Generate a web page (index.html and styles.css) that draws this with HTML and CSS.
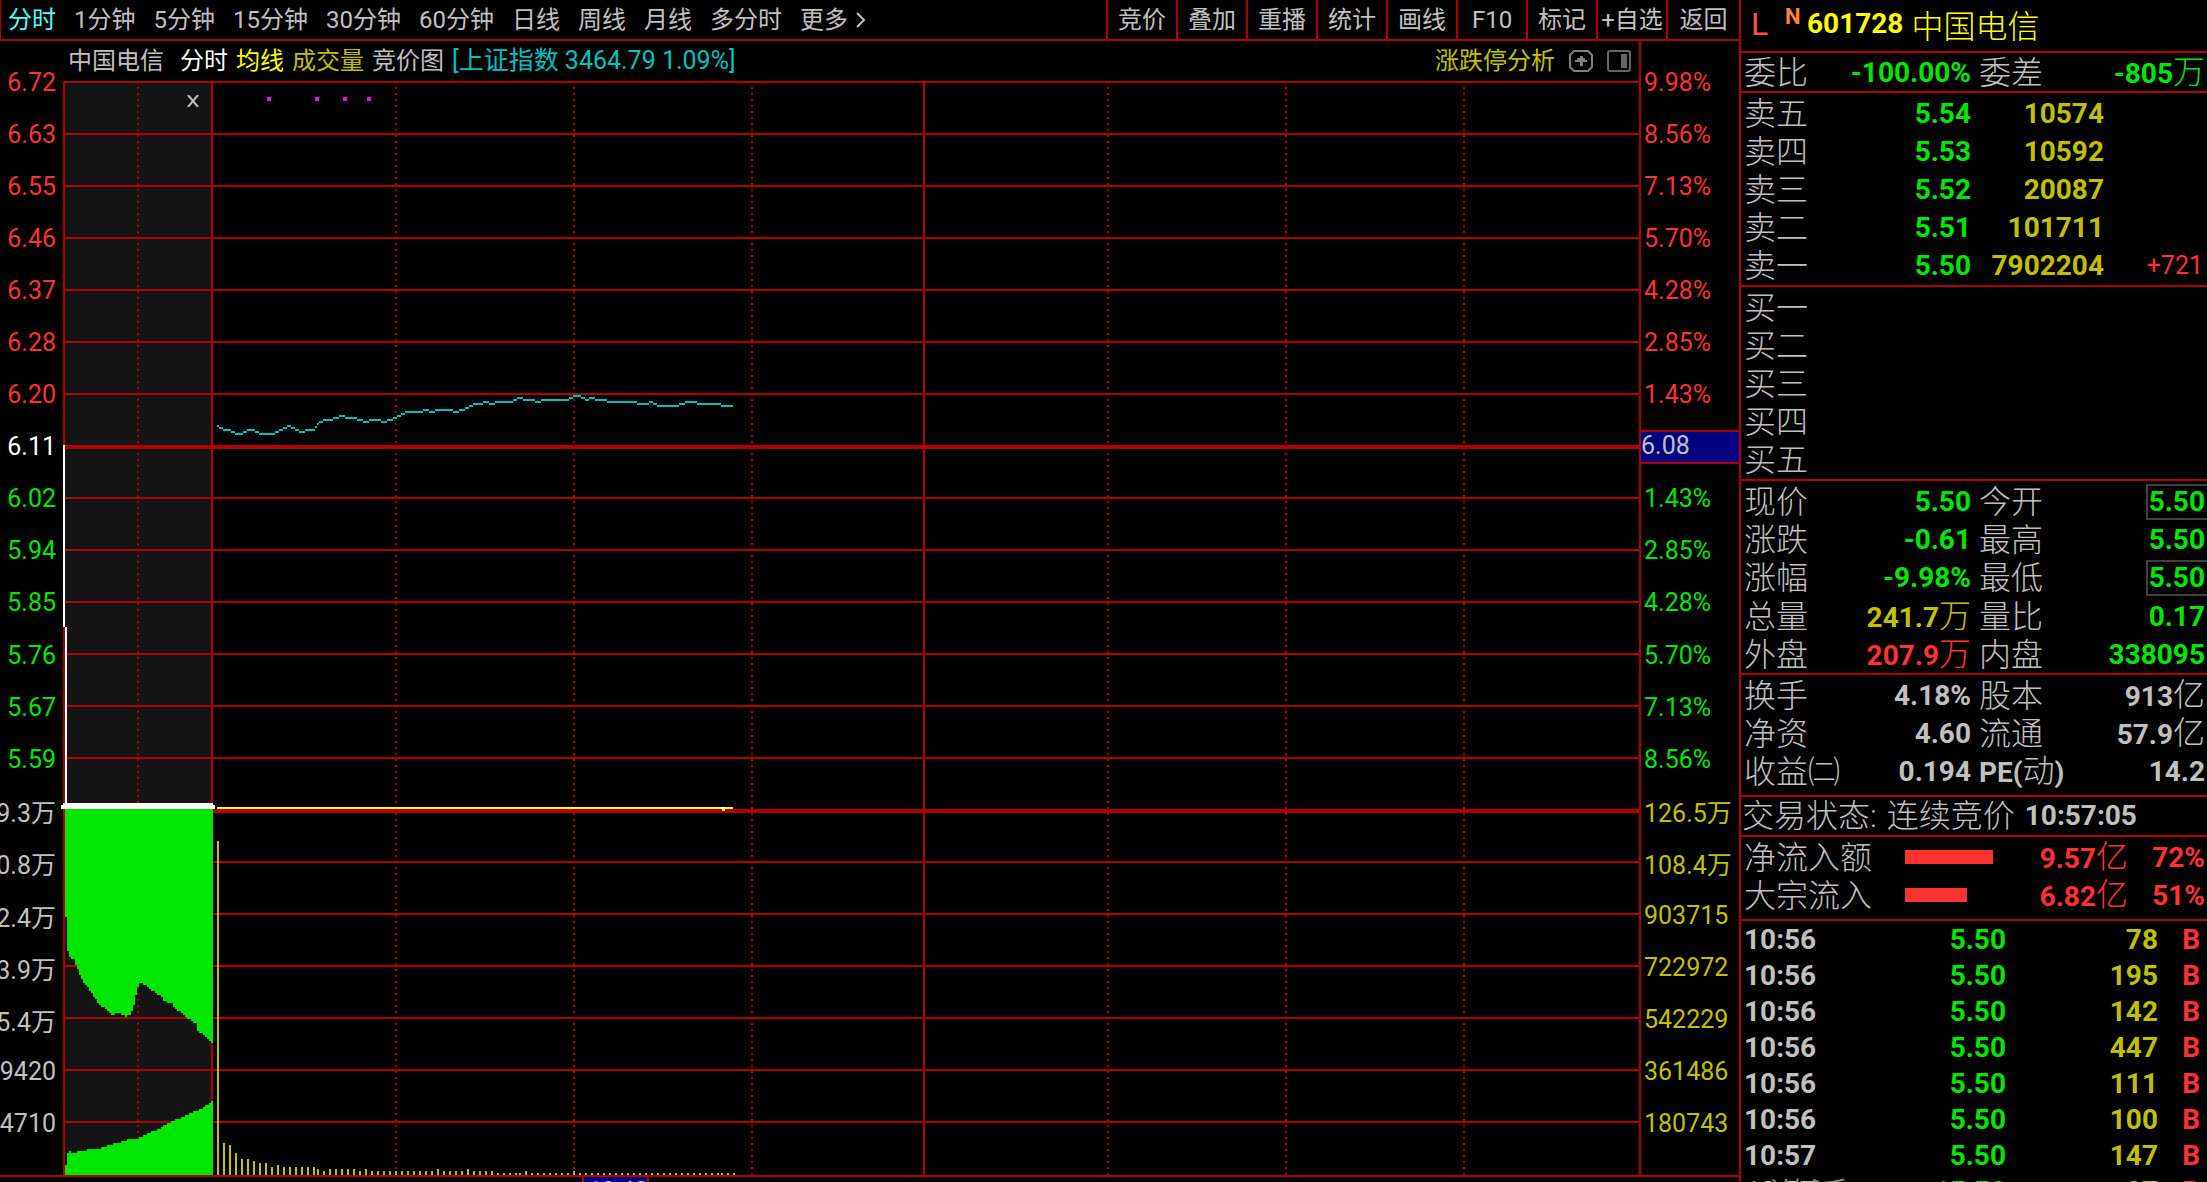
FILE: index.html
```html
<!DOCTYPE html>
<html lang="zh-CN">
<head>
<meta charset="utf-8">
<title>601728 中国电信 分时</title>
<link rel="stylesheet" href="styles.css">
</head>
<body>
<main class="main">
  <header class="toolbar">
    <nav class="periods">
      <button class="active">分时</button><button>1分钟</button><button>5分钟</button><button>15分钟</button><button>30分钟</button><button>60分钟</button><button>日线</button><button>周线</button><button>月线</button><button>多分时</button><button class="more">更多<svg width="10" height="16" viewBox="0 0 10 16"><path d="M1 1 L8 8 L1 15"/></svg></button>
    </nav>
    <div class="tools">
      <button>竞价</button><button>叠加</button><button>重播</button><button>统计</button><button>画线</button><button>F10</button><button>标记</button><button>+自选</button><button>返回</button>
    </div>
  </header>

  <div class="chart">
    <div class="axis axis-left">
      <span>6.72</span><span>6.63</span><span>6.55</span><span>6.46</span><span>6.37</span><span>6.28</span><span>6.20</span>
      <span class="white">6.11</span>
      <span class="green">6.02</span><span class="green">5.94</span><span class="green">5.85</span><span class="green">5.76</span><span class="green">5.67</span><span class="green">5.59</span>
      <span class="gray">9.3万</span><span class="gray">0.8万</span><span class="gray">2.4万</span><span class="gray">3.9万</span><span class="gray">5.4万</span><span class="gray">9420</span><span class="gray">4710</span>
    </div>

    <div class="center">
      <div class="info">
        <span class="name">中国电信</span>
        <button class="white">分时</button>
        <button class="yellow">均线</button>
        <button class="olive">成交量</button>
        <button>竞价图</button>
        <span class="cyan">[上证指数 3464.79 1.09%]</span>
        <a class="analysis" href="#">涨跌停分析</a>
        <button class="icon" aria-label="上移"><svg width="24" height="22" viewBox="0 0 24 22"><path d="M5 1H19L23 5V17L19 21H5L1 17V5Z" fill="none" stroke="#808080" stroke-width="2"/><path d="M11 6h3v2h2v2h2v2h-4v4h-3v-4H6v-2h2V8h3z" fill="#808080"/></svg></button>
        <button class="icon" aria-label="侧栏"><svg width="24" height="22" viewBox="0 0 24 22"><rect x="1" y="1" width="22" height="20" rx="2" fill="none" stroke="#666" stroke-width="2"/><path d="M14 4h6v14h-6z" fill="#666"/></svg></button>
      </div>
      <div class="plot">
        <svg id="plot" viewBox="63 81 1576 1094" preserveAspectRatio="none" shape-rendering="crispEdges"></svg>
        <button class="close" aria-label="关闭"><svg width="12" height="12" viewBox="0 0 12 12"><path d="M1 0 L11 12 M11 0 L1 12"/></svg></button>
      </div>
    </div>

    <div class="axis axis-right">
      <span>9.98%</span><span>8.56%</span><span>7.13%</span><span>5.70%</span><span>4.28%</span><span>2.85%</span><span>1.43%</span>
      <span class="current"><b>6.08</b></span>
      <span class="green">1.43%</span><span class="green">2.85%</span><span class="green">4.28%</span><span class="green">5.70%</span><span class="green">7.13%</span><span class="green">8.56%</span>
      <span class="olive">126.5万</span><span class="olive">108.4万</span><span class="olive">903715</span><span class="olive">722972</span><span class="olive">542229</span><span class="olive">361486</span><span class="olive">180743</span>
    </div>
  </div>
  <footer class="times"><span>10:48</span></footer>
</main>

<aside class="side">
  <h1 class="title"><span class="flag-l">L</span><sup>N</sup><b>601728</b> <span class="stock">中国电信</span></h1>

  <section class="pairs single">
    <div class="pair"><span>委比</span><b class="green">-100.00%</b><span>委差</span><b class="green">-805<i>万</i></b></div>
  </section>

  <section class="sell">
    <table class="book">
      <tr><th>卖五</th><td class="price">5.54</td><td class="vol">10574</td><td class="chg"></td></tr>
      <tr><th>卖四</th><td class="price">5.53</td><td class="vol">10592</td><td class="chg"></td></tr>
      <tr><th>卖三</th><td class="price">5.52</td><td class="vol">20087</td><td class="chg"></td></tr>
      <tr><th>卖二</th><td class="price">5.51</td><td class="vol">101711</td><td class="chg"></td></tr>
      <tr><th>卖一</th><td class="price">5.50</td><td class="vol">7902204</td><td class="chg">+721</td></tr>
    </table>
  </section>

  <section class="buy">
    <table class="book">
      <tr><th>买一</th><td class="price"></td><td class="vol"></td><td class="chg"></td></tr>
      <tr><th>买二</th><td class="price"></td><td class="vol"></td><td class="chg"></td></tr>
      <tr><th>买三</th><td class="price"></td><td class="vol"></td><td class="chg"></td></tr>
      <tr><th>买四</th><td class="price"></td><td class="vol"></td><td class="chg"></td></tr>
      <tr><th>买五</th><td class="price"></td><td class="vol"></td><td class="chg"></td></tr>
    </table>
  </section>

  <section class="pairs prices">
    <div class="pair"><span>现价</span><b class="green">5.50</b><span>今开</span><b class="green boxed">5.50</b></div>
    <div class="pair"><span>涨跌</span><b class="green">-0.61</b><span>最高</span><b class="green">5.50</b></div>
    <div class="pair"><span>涨幅</span><b class="green">-9.98%</b><span>最低</span><b class="green boxed">5.50</b></div>
    <div class="pair"><span>总量</span><b class="olive">241.7<i>万</i></b><span>量比</span><b class="green">0.17</b></div>
    <div class="pair"><span>外盘</span><b class="red">207.9<i>万</i></b><span>内盘</span><b class="green">338095</b></div>
  </section>

  <section class="pairs ratios">
    <div class="pair"><span>换手</span><b>4.18%</b><span>股本</span><b>913<i>亿</i></b></div>
    <div class="pair"><span>净资</span><b>4.60</b><span>流通</span><b>57.9<i>亿</i></b></div>
    <div class="pair"><span>收益㈡</span><b>0.194</b><span><b>PE(</b>动<b>)</b></span><b>14.2</b></div>
  </section>

  <section class="status"><span>交易状态:</span><span>连续竞价</span><b>10:57:05</b></section>

  <section class="flows">
    <div class="flow"><span class="label">净流入额</span><span class="track"><span class="bar" style="width:88px"></span></span><b>9.57<i>亿</i></b><b>72%</b></div>
    <div class="flow"><span class="label">大宗流入</span><span class="track"><span class="bar" style="width:62px"></span></span><b>6.82<i>亿</i></b><b>51%</b></div>
  </section>

  <section class="last">
    <table class="ticks">
      <tr><td>10:56</td><td class="tp">5.50</td><td class="tv">78</td><td class="tb">B</td></tr>
      <tr><td>10:56</td><td class="tp">5.50</td><td class="tv">195</td><td class="tb">B</td></tr>
      <tr><td>10:56</td><td class="tp">5.50</td><td class="tv">142</td><td class="tb">B</td></tr>
      <tr><td>10:56</td><td class="tp">5.50</td><td class="tv">447</td><td class="tb">B</td></tr>
      <tr><td>10:56</td><td class="tp">5.50</td><td class="tv">111</td><td class="tb">B</td></tr>
      <tr><td>10:56</td><td class="tp">5.50</td><td class="tv">100</td><td class="tb">B</td></tr>
      <tr><td>10:57</td><td class="tp">5.50</td><td class="tv">147</td><td class="tb">B</td></tr>
      <tr><td>10:57</td><td class="tp">5.50</td><td class="tv">27</td><td class="tb">B</td></tr>
    </table>
  </section>
  <div class="watermark">激活 Windows</div>
</aside>
<script src="chart.js"></script>
</body>
</html>
```
FILE: styles.css
```css
* { box-sizing: border-box; }

:root {
  --line: #b00000;
  --gray: #c0c0c0;
  --red: #ff3232;
  --green: #00e600;
  --olive: #c0c000;
  --font: Roboto, "Noto Sans CJK SC", sans-serif;
}

body {
  margin: 0;
  height: 100vh;
  display: flex;
  overflow: hidden;
  background: #000;
  color: var(--gray);
  font-family: var(--font);
  font-size: 24px;
  font-weight: 400;
}

button {
  margin: 0;
  padding: 0;
  border: 0;
  background: none;
  color: inherit;
  font: inherit;
  line-height: 38px;
  white-space: nowrap;
}

i { font-style: normal; }

.white { color: #fff; }
.yellow { color: #ff0; }
.green { color: var(--green); }
.olive { color: var(--olive); }
.red { color: var(--red); }
.gray { color: var(--gray); }
.cyan { color: #00c0c0; }

/* main column */
.main { flex: 1; min-width: 0; display: flex; flex-direction: column; }

.toolbar {
  display: flex;
  justify-content: space-between;
  height: 41px;
  border-bottom: 2px solid var(--line);
}
.periods {
  display: flex;
  gap: 18px;
  padding-left: 8px;
  box-shadow: inset 1px 0 var(--line);
}
.periods .active { color: #54ffff; }
.more { display: flex; align-items: center; gap: 8px; }
.more svg, .close svg { fill: none; stroke: var(--gray); stroke-width: 2; }
.tools { display: grid; grid-template-columns: repeat(8, 70px) 73px; }
.tools button { border-left: 2px solid var(--line); }

.chart { flex: 1; min-height: 0; display: flex; border-bottom: 2px solid var(--line); }

.axis {
  display: flex;
  flex-direction: column;
  padding-top: 15px;
  padding-bottom: 25px;
  font-size: 25px;
  color: var(--red);
}
.axis span { flex: 1; display: flex; align-items: center; white-space: nowrap; }
.axis .white { color: #fff; }
.axis .green { color: var(--green); }
.axis .olive { color: var(--olive); }
.axis .gray { color: var(--gray); }
.axis-left { width: 63px; padding-right: 7px; }
.axis-left span { justify-content: flex-end; }
.axis-right { width: 100px; border-left: 2px solid var(--line); }
.axis-right span { padding-left: 3px; }
.axis-right .current { padding: 0; }
.current b {
  width: 100%;
  height: 34px;
  line-height: 27px;
  border: solid var(--line);
  border-width: 2px 0;
  background: #000080;
  color: var(--gray);
  font-weight: 400;
}

.center { flex: 1; min-width: 0; display: flex; flex-direction: column; }
.info {
  display: flex;
  align-items: center;
  gap: 8px;
  height: 40px;
  padding: 0 8px 0 5px;
  line-height: 38px;
}
.info .name { margin-right: 8px; }
.info .cyan { font-size: 25px; }
.info .analysis {
  margin-left: auto;
  color: var(--olive);
  text-decoration: none;
}
.icon { display: flex; margin-left: 6px; }
.plot { flex: 1; min-height: 0; position: relative; }
.plot > svg { display: block; width: 100%; height: 100%; overflow: visible; }
.close { position: absolute; left: 124px; top: 14px; display: flex; }

.times { height: 5px; padding-left: 582px; overflow: hidden; }
.times span {
  display: block;
  width: 67px;
  padding-left: 4px;
  border: solid var(--line);
  border-width: 0 2px;
  background: #000080;
  line-height: 26px;
}

/* quote panel */
.side {
  position: relative;
  width: 468px;
  border-left: 2px solid var(--line);
  overflow: hidden;
  font-size: 32px;
  font-weight: 300;
}
.side b, .price, .vol, .ticks { font-size: 28px; font-weight: 700; }
.side i { font-size: 32px; font-weight: 300; }

.title {
  display: flex;
  align-items: center;
  height: 53px;
  margin: 0;
  padding: 0 0 4px 10px;
  border-bottom: 2px solid var(--line);
  color: #ff0;
  font-size: 32px;
  font-weight: 300;
}
.flag-l { width: 34px; color: #ff5050; font-weight: 400; }
.title sup {
  width: 22px;
  align-self: flex-start;
  padding-top: 4px;
  color: #ff8040;
  font-size: 22px;
  font-weight: 700;
  line-height: 26px;
}
.title .stock { margin-left: 8px; }

.side section { padding: 1px 2px 1px 3px; border-bottom: 2px solid var(--line); }
.side .single { padding-top: 0; padding-bottom: 0; }
.side .sell,
.side .buy,
.side .prices { padding-top: 2px; padding-bottom: 0; }
.side .ratios { padding-bottom: 5px; }
.side .last { border: 0; }

.pair {
  display: grid;
  grid-template-columns: 227px 8px 1fr 1fr;
  align-items: center;
  height: 38px;
  line-height: 38px;
  white-space: nowrap;
}
.pair > :nth-child(1) { grid-area: 1 / 1; }
.pair > :nth-child(2) { grid-area: 1 / 1; justify-self: end; }
.pair > :nth-child(3) { grid-area: 1 / 3; }
.pair > :nth-child(4) { grid-area: 1 / 4; justify-self: end; }
.side .boxed {
  height: 36px;
  margin-right: -2px;
  padding: 0 2px 0 1px;
  border: 2px solid #404040;
  border-right: 0;
  line-height: 32px;
}

table { width: 100%; border-collapse: collapse; table-layout: fixed; }
th, td { padding: 0; height: 38px; line-height: 38px; text-align: right; }
th { width: 100px; text-align: left; font-weight: 300; font-size: 32px; }
.price { width: 127px; color: var(--green); }
.vol { width: 133px; color: var(--olive); }
.chg { font-size: 25px; font-weight: 400; color: var(--red); padding-right: 2px; }

.status { display: flex; align-items: center; gap: 10px; height: 40px; line-height: 38px; white-space: nowrap; }
.side .status { padding: 0 0 0 1px; }

.side .flows { padding-bottom: 5px; }
.flow {
  display: grid;
  grid-template-columns: 161px 98px 125px 1fr;
  align-items: center;
  height: 38px;
  line-height: 38px;
}
.flow b { color: var(--red); text-align: right; white-space: nowrap; }
.track { padding-bottom: 2px; }
.bar { display: block; height: 14px; background: var(--red); }

.ticks td { height: 36px; line-height: 36px; }
.ticks td:first-child { width: 120px; text-align: left; }
.ticks .tp { width: 142px; color: var(--green); }
.ticks .tv { width: 152px; color: var(--olive); }
.ticks .tb { color: var(--red); padding-right: 5px; }

.watermark {
  position: absolute;
  left: 28px;
  bottom: -37px;
  color: #888;
  font-size: 40px;
  line-height: 40px;
}
```
FILE: chart.js
```js
(function () {
  const RED = '#b00000', GREEN = '#00e600', OLIVE = '#c0c000';
  const svg = document.getElementById('plot');

  function add(name, attrs) {
    const el = document.createElementNS('http://www.w3.org/2000/svg', name);
    for (const key in attrs) el.setAttribute(key, attrs[key]);
    svg.appendChild(el);
  }
  function rect(x, y, width, height, fill) {
    add('rect', { x, y, width, height, fill });
  }
  function steps(points, endX) {
    let d = '';
    points.forEach(([x, y], i) => {
      const next = i + 1 < points.length ? points[i + 1][0] : endX;
      d += (i ? 'L' : 'M') + x + ' ' + y + 'H' + next;
    });
    return d;
  }

  // auction area and grid
  rect(65, 83, 146, 1092, '#141414');
  for (let i = 0; i < 14; i++) {
    if (i === 7) rect(63, 445, 1576, 4, RED);
    else rect(63, 81 + 52 * i, 1576, 2, RED);
  }
  rect(63, 809, 1576, 4, RED);
  for (let i = 0; i < 6; i++) rect(63, 861 + 52 * i, 1576, 2, RED);
  for (const x of [138, 396, 574, 752, 1108, 1286, 1464]) {
    add('path', { d: `M${x} 87V1175`, stroke: RED, 'stroke-width': 2, 'stroke-dasharray': '2 4' });
  }
  for (const x of [63, 211, 923]) rect(x, 81, 2, 1094, RED);

  // auction volumes
  const unmatched = [[65,917],[67,951],[69,957],[71,959],[75,965],[77,969],[79,975],[81,979],[83,983],[85,985],[87,987],[89,991],[91,993],[93,997],[95,999],[97,1003],[99,1005],[101,1007],[105,1009],[107,1011],[109,1013],[111,1015],[115,1013],[121,1015],[125,1017],[127,1015],[131,1011],[133,1005],[135,995],[137,987],[139,983],[143,985],[147,987],[149,989],[151,991],[155,993],[157,995],[161,997],[163,1001],[167,1003],[173,1007],[175,1009],[177,1011],[181,1013],[183,1015],[185,1017],[187,1019],[191,1021],[193,1023],[197,1031],[199,1033],[203,1035],[205,1037],[207,1039],[209,1041],[211,1043]];
  const matched = [[65,1165],[67,1153],[69,1151],[71,1153],[77,1151],[87,1149],[101,1147],[107,1145],[113,1143],[121,1141],[127,1139],[139,1137],[143,1135],[147,1133],[151,1131],[157,1129],[161,1127],[163,1125],[167,1123],[171,1121],[175,1119],[181,1117],[185,1115],[189,1113],[193,1111],[199,1109],[203,1107],[205,1105],[209,1103],[211,1101]];
  add('path', { d: steps(unmatched, 213) + 'V809H65Z', fill: GREEN });
  add('path', { d: steps(matched, 213) + 'V1175H65Z', fill: GREEN });

  // index overlay
  const index = [[217,426],[219,428],[223,430],[231,432],[235,434],[243,432],[247,430],[255,432],[259,434],[275,432],[279,430],[283,428],[287,426],[291,428],[295,430],[299,432],[305,430],[315,427],[317,424],[319,422],[323,420],[333,418],[339,416],[345,418],[357,420],[363,422],[369,420],[381,422],[387,420],[393,418],[397,416],[401,414],[405,412],[423,410],[429,412],[435,410],[453,412],[459,410],[465,408],[469,406],[473,404],[483,402],[489,404],[495,402],[513,400],[517,398],[523,400],[535,402],[541,400],[569,398],[573,396],[581,398],[585,400],[589,398],[595,400],[607,402],[637,404],[649,402],[653,404],[657,406],[679,404],[685,402],[697,404],[721,406]];
  index.forEach(([x, y], i) => {
    const next = i + 1 < index.length ? index[i + 1][0] : 733;
    rect(x, y - 1, next - x, 2, '#00c0c0');
  });

  // minute volumes
  const fill = (n, v) => Array(n).fill(v);
  const runs = [
    [217, [334, 32, 30, 22, 16, 16, 14, 12, 12, 8, 10, ...fill(6, 8)]],
    [317, [6, 4, ...fill(5, 6), 4, 6, ...fill(11, 4), 6, ...fill(4, 4), 6, ...fill(4, 4), ...fill(4, 2)]],
    [519, [2, 4, ...fill(7, 2), 4, ...fill(24, 2)]],
    [721, [2, 2, 2]]
  ];
  for (const [start, heights] of runs) {
    heights.forEach((h, i) => rect(start + 6 * i, 1175 - h, 2, h, OLIVE));
  }

  // price lines
  rect(63, 445, 2, 182, '#fff');
  rect(65, 627, 2, 178, '#fff');
  rect(217, 807, 516, 2, '#ff0');
  rect(722, 807, 3, 4, '#ff0');
  rect(721, 807, 4, 2, '#fff');
  rect(61, 805, 154, 4, '#fff');
  rect(63, 803, 150, 6, '#fff');

  for (const x of [267, 315, 343, 367]) rect(x, 97, 4, 4, '#ff00ff');
})();
```
